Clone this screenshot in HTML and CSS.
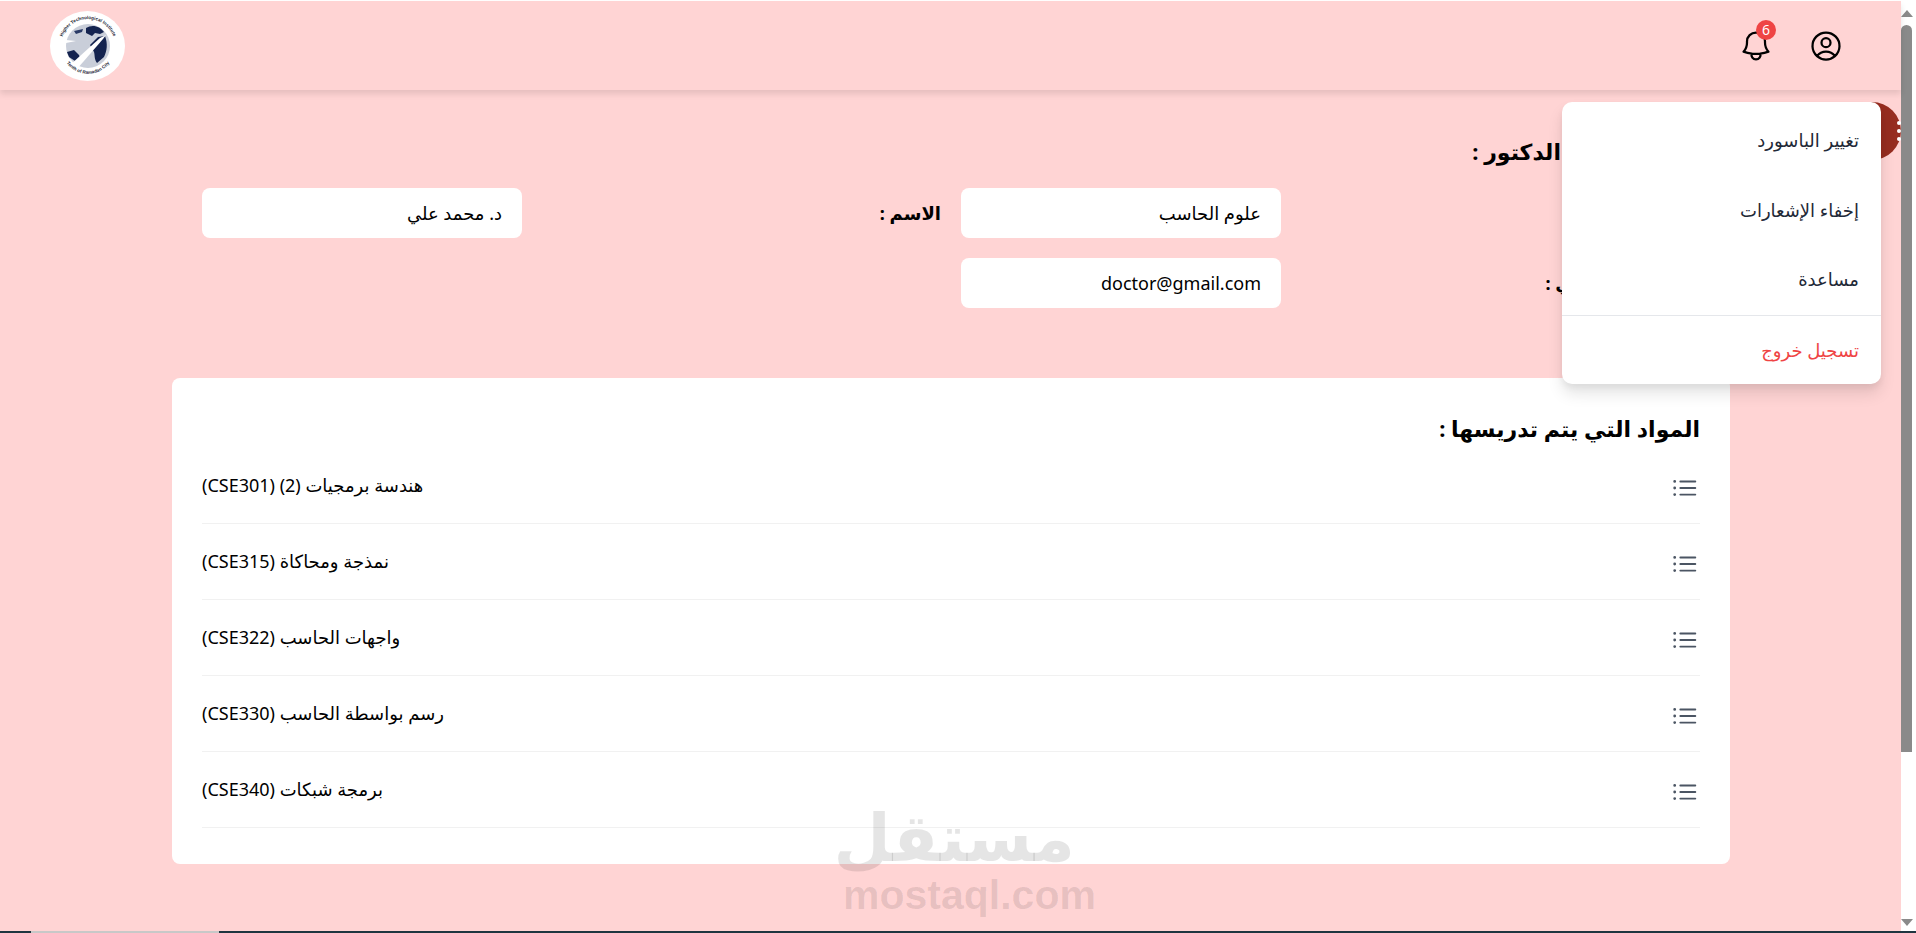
FILE: index.html
```html
<!DOCTYPE html>
<html lang="ar" dir="rtl">
<head>
  <meta charset="UTF-8" />
  <meta name="viewport" content="width=device-width, initial-scale=1.0"/>
  <title>بيانات الدكتور</title>
  <link rel="stylesheet" href="styles.css">
</head>
<body>
  <div class="window">
    <div class="scrollbar">
      <div class="arrow-up"></div>
      <div class="thumb"></div>
      <div class="arrow-down"></div>
    </div>

    <div class="page">
      <!-- Navbar -->
      <header class="navbar">
        <div class="nav-icons">
          <svg class="nav-icon" viewBox="0 0 24 24" fill="none" stroke="currentColor" stroke-width="1.5" stroke-linecap="round" stroke-linejoin="round">
            <path d="M17.982 18.725A7.488 7.488 0 0 0 12 15.75a7.488 7.488 0 0 0-5.982 2.975m11.964 0a9 9 0 1 0-11.963 0m11.963 0A8.966 8.966 0 0 1 12 21a8.966 8.966 0 0 1-5.982-2.275M15 9.75a3 3 0 1 1-6 0 3 3 0 0 1 6 0Z"/>
          </svg>
          <div class="bell">
            <svg class="nav-icon" viewBox="0 0 24 24" fill="none" stroke="currentColor" stroke-width="1.5" stroke-linecap="round" stroke-linejoin="round">
              <path d="M14.857 17.082a23.848 23.848 0 0 0 5.454-1.31A8.967 8.967 0 0 1 18 9.75V9A6 6 0 0 0 6 9v.75a8.967 8.967 0 0 1-2.312 6.022c1.733.64 3.56 1.085 5.455 1.31m5.714 0a24.255 24.255 0 0 1-5.714 0m5.714 0a3 3 0 1 1-5.714 0"/>
            </svg>
            <span class="badge">6</span>
          </div>
        </div>
        <svg class="logo" viewBox="0 0 75 70" dir="ltr">
          <ellipse cx="37.5" cy="35" rx="37.5" ry="35" fill="#fff"/>
          <circle cx="38" cy="35" r="22" fill="#c9ced9"/>
          <path d="M36 17c6-4 14-2 18 4l-4 2-5-1-3 3-6-3z" fill="#14234f"/>
          <path d="M40 34l8-8 7-1c3 8 2 15-1 21l-7 6c-3-4-2-8-3-11z" fill="#14234f"/>
          <path d="M17 41l7-2 5 5 2 5-6 1-6-4z" fill="#14234f"/>
          <path d="M24 20l9-2-1 3-6 2z" fill="#2a3a66"/>
          <path d="M27 58L53 28l3-4-6 3-30 27z" fill="#fff"/>
          <path d="M16 29l10 1-10 2z" fill="#fff"/>
          <defs>
            <path id="logoTop" d="M11 35a27 27 0 0 1 54 0"/>
            <path id="logoBottom" d="M13 46a27 27 0 0 0 50 0"/>
          </defs>
          <text class="logo-text"><textPath href="#logoTop" startOffset="50%" text-anchor="middle">Higher Technological Institute</textPath></text>
          <text class="logo-text"><textPath href="#logoBottom" startOffset="50%" text-anchor="middle">Tenth of Ramadan City</textPath></text>
        </svg>
      </header>

      <main class="content">
        <section class="info">
          <h2 class="info-title">معلومات عن الدكتور :</h2>
          <div class="info-grid">
            <div class="info-item">
              <label class="info-label">القسم :</label>
              <div class="field">علوم الحاسب</div>
            </div>
            <div class="info-item">
              <label class="info-label">الاسم :</label>
              <div class="field">د. محمد علي</div>
            </div>
            <div class="info-item">
              <label class="info-label">البريد الإلكتروني :</label>
              <div class="field">doctor@gmail.com</div>
            </div>
          </div>
        </section>

        <section class="card">
          <h2 class="card-title">المواد التي يتم تدريسها :</h2>
          <div class="subject">
            <svg class="list-icon" viewBox="0 0 24 24" fill="none" stroke="currentColor" stroke-width="1.5" stroke-linecap="round" stroke-linejoin="round"><path d="M8.25 6.75h12M8.25 12h12m-12 5.25h12M3.75 6.75h.007v.008H3.75V6.75Zm.375 0a.375.375 0 1 1-.75 0 .375.375 0 0 1 .75 0ZM3.75 12h.007v.008H3.75V12Zm.375 0a.375.375 0 1 1-.75 0 .375.375 0 0 1 .75 0Zm-.375 5.25h.007v.008H3.75v-.008Zm.375 0a.375.375 0 1 1-.75 0 .375.375 0 0 1 .75 0Z"/></svg>
            <span>هندسة برمجيات (2) (CSE301)</span>
          </div>
          <div class="subject">
            <svg class="list-icon" viewBox="0 0 24 24" fill="none" stroke="currentColor" stroke-width="1.5" stroke-linecap="round" stroke-linejoin="round"><path d="M8.25 6.75h12M8.25 12h12m-12 5.25h12M3.75 6.75h.007v.008H3.75V6.75Zm.375 0a.375.375 0 1 1-.75 0 .375.375 0 0 1 .75 0ZM3.75 12h.007v.008H3.75V12Zm.375 0a.375.375 0 1 1-.75 0 .375.375 0 0 1 .75 0Zm-.375 5.25h.007v.008H3.75v-.008Zm.375 0a.375.375 0 1 1-.75 0 .375.375 0 0 1 .75 0Z"/></svg>
            <span>نمذجة ومحاكاة (CSE315)</span>
          </div>
          <div class="subject">
            <svg class="list-icon" viewBox="0 0 24 24" fill="none" stroke="currentColor" stroke-width="1.5" stroke-linecap="round" stroke-linejoin="round"><path d="M8.25 6.75h12M8.25 12h12m-12 5.25h12M3.75 6.75h.007v.008H3.75V6.75Zm.375 0a.375.375 0 1 1-.75 0 .375.375 0 0 1 .75 0ZM3.75 12h.007v.008H3.75V12Zm.375 0a.375.375 0 1 1-.75 0 .375.375 0 0 1 .75 0Zm-.375 5.25h.007v.008H3.75v-.008Zm.375 0a.375.375 0 1 1-.75 0 .375.375 0 0 1 .75 0Z"/></svg>
            <span>واجهات الحاسب (CSE322)</span>
          </div>
          <div class="subject">
            <svg class="list-icon" viewBox="0 0 24 24" fill="none" stroke="currentColor" stroke-width="1.5" stroke-linecap="round" stroke-linejoin="round"><path d="M8.25 6.75h12M8.25 12h12m-12 5.25h12M3.75 6.75h.007v.008H3.75V6.75Zm.375 0a.375.375 0 1 1-.75 0 .375.375 0 0 1 .75 0ZM3.75 12h.007v.008H3.75V12Zm.375 0a.375.375 0 1 1-.75 0 .375.375 0 0 1 .75 0Zm-.375 5.25h.007v.008H3.75v-.008Zm.375 0a.375.375 0 1 1-.75 0 .375.375 0 0 1 .75 0Z"/></svg>
            <span>رسم بواسطة الحاسب (CSE330)</span>
          </div>
          <div class="subject">
            <svg class="list-icon" viewBox="0 0 24 24" fill="none" stroke="currentColor" stroke-width="1.5" stroke-linecap="round" stroke-linejoin="round"><path d="M8.25 6.75h12M8.25 12h12m-12 5.25h12M3.75 6.75h.007v.008H3.75V6.75Zm.375 0a.375.375 0 1 1-.75 0 .375.375 0 0 1 .75 0ZM3.75 12h.007v.008H3.75V12Zm.375 0a.375.375 0 1 1-.75 0 .375.375 0 0 1 .75 0Zm-.375 5.25h.007v.008H3.75v-.008Zm.375 0a.375.375 0 1 1-.75 0 .375.375 0 0 1 .75 0Z"/></svg>
            <span>برمجة شبكات (CSE340)</span>
          </div>
        </section>
      </main>

      <!-- Floating button and its open menu -->
      <button class="fab">
        <span class="fab-dot"></span>
        <span class="fab-dot"></span>
        <span class="fab-dot"></span>
      </button>
      <div class="menu">
        <a class="menu-item">تغيير الباسورد</a>
        <a class="menu-item">إخفاء الإشعارات</a>
        <a class="menu-item">مساعدة</a>
        <a class="menu-item menu-logout">تسجيل خروج</a>
      </div>

      <div class="watermark">
        <div class="watermark-ar">مستقل</div>
        <div class="watermark-en">mostaql.com</div>
      </div>
    </div>
  </div>
  <div class="taskbar">
    <span class="taskbar-tab"></span>
  </div>
</body>
</html>
```

FILE: styles.css
```css
* {
  box-sizing: border-box;
}
html, body {
  height: 100%;
}
body {
  margin: 0;
  font-family: "Noto Sans", "DejaVu Sans", sans-serif;
  background-color: #ffffff;
  color: #000000;
  overflow: hidden;
  display: flex;
  flex-direction: column;
  padding-top: 1px;
}
.window {
  flex: 1;
  display: flex;
  min-height: 0;
}
.page {
  flex: 1;
  position: relative;
  background-color: #ffd4d4;
}

/* fake browser scrollbar */
.scrollbar {
  width: 15px;
  background: #ffffff;
  display: flex;
  flex-direction: column;
  align-items: flex-end;
  padding-top: 9px;
}
.arrow-up {
  width: 0;
  height: 0;
  border-left: 6px solid transparent;
  border-right: 6px solid transparent;
  border-bottom: 7px solid #8a8a8a;
  margin-right: 1px;
}
.thumb {
  width: 11px;
  height: 727px;
  margin-top: 8px;
  background: #8a8a8a;
  border-radius: 6px 6px 0 0;
}
.arrow-down {
  width: 0;
  height: 0;
  border-left: 6px solid transparent;
  border-right: 6px solid transparent;
  border-top: 7px solid #8a8a8a;
  margin-top: auto;
  margin-bottom: 5px;
  margin-right: 1px;
}
.taskbar {
  height: 2px;
  background: #1f3540;
  display: flex;
  direction: ltr;
}
.taskbar-tab {
  width: 188px;
  margin-left: 31px;
  background: #c8c8c8;
}

/* navbar */
.navbar {
  height: 89px;
  display: flex;
  justify-content: space-between;
  align-items: center;
  padding: 0 57px 0 50px;
  background-color: #ffd4d4;
  box-shadow: 0 4px 6px rgba(0, 0, 0, 0.1);
}
.nav-icons {
  display: flex;
  align-items: center;
  gap: 34px;
}
.nav-icon {
  width: 36px;
  height: 36px;
  display: block;
}
.bell {
  position: relative;
}
.badge {
  position: absolute;
  top: -8px;
  left: 18px;
  width: 20px;
  height: 20px;
  border-radius: 50%;
  background: #ef4444;
  color: #ffffff;
  font-size: 14px;
  line-height: 20px;
  text-align: center;
}
.logo {
  width: 75px;
  height: 70px;
  display: block;
}
.logo-text {
  font-family: "Liberation Sans", sans-serif;
  font-size: 4.6px;
  font-weight: 700;
  fill: #1f2937;
}

/* doctor info */
.content {
  padding: 0 171px 0 172px;
}
.info {
  padding: 44px 30px 0;
}
.info-title {
  margin: 0 0 20px;
  font-size: 22px;
  line-height: 34px;
  font-weight: 700;
}
.info-grid {
  display: grid;
  grid-template-columns: 1fr 1fr;
  gap: 20px;
}
.info-item {
  display: flex;
  align-items: center;
  justify-content: space-between;
}
.info-label {
  font-size: 18px;
  font-weight: 700;
}
.field {
  width: 320px;
  height: 50px;
  padding: 0 20px;
  background: #ffffff;
  border-radius: 8px;
  font-size: 18px;
  line-height: 50px;
}

/* subjects card */
.card {
  margin-top: 70px;
  padding: 30px 30px 30px;
  background: #ffffff;
  border-radius: 8px;
  height: 486px;
}
.card-title {
  margin: 0;
  font-size: 22px;
  line-height: 40px;
  font-weight: 700;
}
.subject {
  height: 76px;
  padding-top: 25px;
  display: flex;
  align-items: flex-start;
  justify-content: space-between;
  border-bottom: 1px solid #f1f1f1;
  font-size: 18px;
}
.list-icon {
  width: 30px;
  height: 30px;
  color: #4b5563;
}

/* floating button + menu */
.fab {
  position: absolute;
  top: 101px;
  left: 1843px;
  width: 58px;
  height: 58px;
  padding: 0 0 0 39px;
  border: none;
  border-radius: 50%;
  background: #962d20;
  display: flex;
  flex-direction: column;
  justify-content: center;
  align-items: flex-start;
  gap: 4px;
}
.fab-dot {
  width: 4px;
  height: 4px;
  border-radius: 50%;
  background: #ffffff;
}
.menu {
  position: absolute;
  top: 101px;
  left: 1562px;
  width: 319px;
  height: 282px;
  padding-top: 4px;
  background: #ffffff;
  border-radius: 10px;
  box-shadow: 0 10px 15px rgba(0, 0, 0, 0.1), 0 4px 6px rgba(0, 0, 0, 0.05);
}
.menu-item {
  display: block;
  height: 69.5px;
  padding: 0 22px;
  font-size: 18px;
  line-height: 69px;
  color: #1f2937;
}
.menu-logout {
  border-top: 1px solid #e5e7eb;
  color: #ef4444;
}

/* site watermark */
.watermark {
  position: absolute;
  top: 800px;
  left: 843px;
  width: 232px;
  text-align: center;
  pointer-events: none;
  color: rgba(0, 0, 0, 0.1);
  font-weight: 700;
}
.watermark-ar {
  font-size: 66px;
  line-height: 76px;
  font-family: "DejaVu Sans", sans-serif;
}
.watermark-en {
  font-family: "Liberation Sans", sans-serif;
  font-size: 41px;
  line-height: 36px;
  direction: ltr;
}
```
